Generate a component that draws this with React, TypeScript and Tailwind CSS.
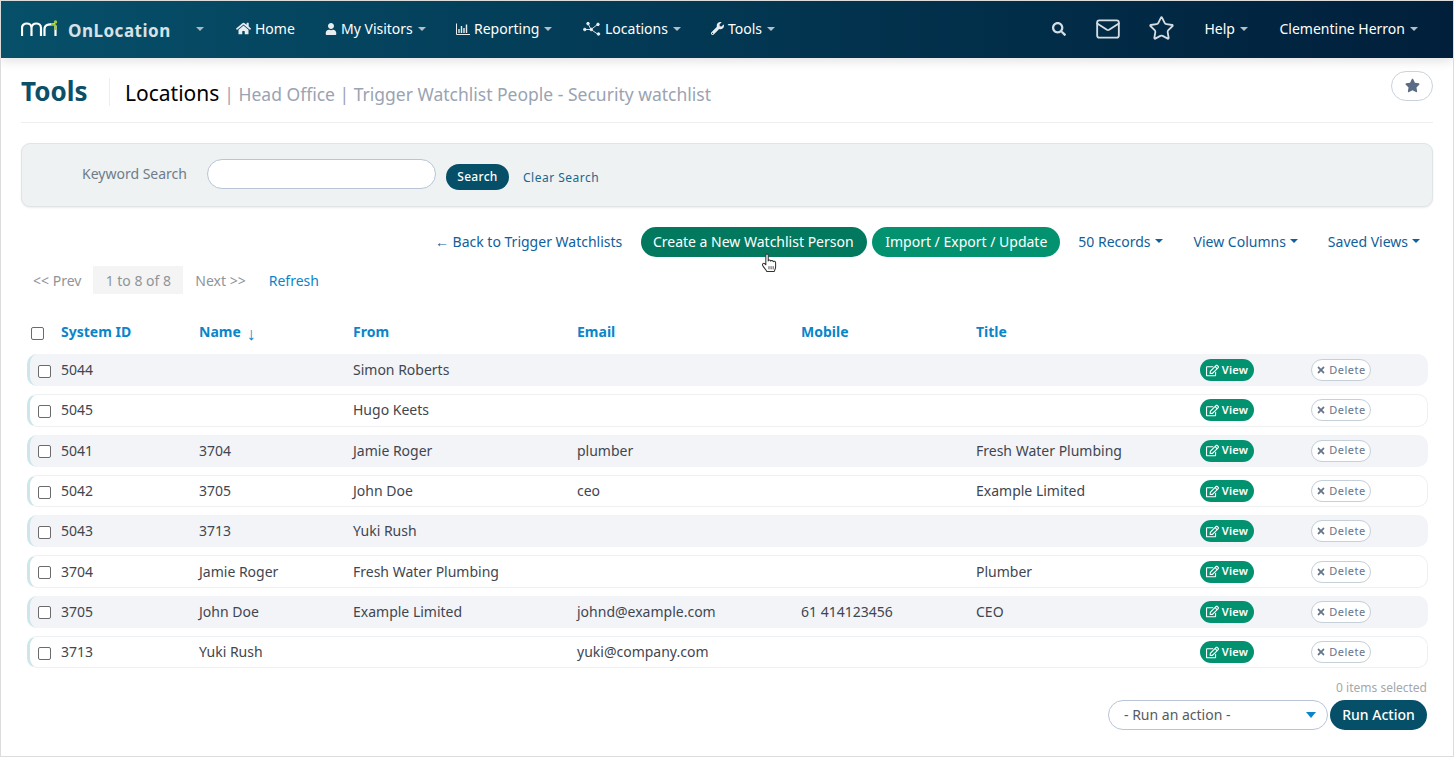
import { FaHome, FaUser, FaWrench, FaSearch, FaStar, FaTimes, FaRegEdit } from 'react-icons/fa';
import { Mail, Star } from 'lucide-react';

const rows = [
    { id: '5044', name: '', from: 'Simon Roberts', email: '', mobile: '', title: '' },
    { id: '5045', name: '', from: 'Hugo Keets', email: '', mobile: '', title: '' },
    { id: '5041', name: '3704', from: 'Jamie Roger', email: 'plumber', mobile: '', title: 'Fresh Water Plumbing' },
    { id: '5042', name: '3705', from: 'John Doe', email: 'ceo', mobile: '', title: 'Example Limited' },
    { id: '5043', name: '3713', from: 'Yuki Rush', email: '', mobile: '', title: '' },
    { id: '3704', name: 'Jamie Roger', from: 'Fresh Water Plumbing', email: '', mobile: '', title: 'Plumber' },
    { id: '3705', name: 'John Doe', from: 'Example Limited', email: 'johnd@example.com', mobile: '61 414123456', title: 'CEO' },
    { id: '3713', name: 'Yuki Rush', from: '', email: 'yuki@company.com', mobile: '', title: '' },
];

const headCols = 'grid grid-cols-[34px_138px_154px_224px_224px_175px_224px_111px_1fr] items-center';
const rowCols = 'grid grid-cols-[31px_138px_154px_224px_224px_175px_224px_111px_1fr] items-center';

function Caret({ className }: { className: string }) {
    return <span className={`inline-block w-0 h-0 border-x-[4px] border-x-transparent border-t-[4px] ${className}`} />;
}

function Logo() {
    return (
        <svg width="37" height="17" viewBox="0 0 37 17" fill="none" strokeWidth="2.2">
            <path d="M1 16V8C1 2 10.5 2 10.5 8V16M10.5 8C10.5 2 20 2 20 8V16" stroke="#ffffff" />
            <path d="M23.5 16V9C23.5 5 27 4.2 34 4.2" stroke="#ffffff" />
            <path d="M34.5 5.5V16" stroke="#ffffff" />
            <circle cx="34.5" cy="2" r="1.7" fill="#a4c83c" />
            <path d="M30 4.2C32 4.2 34.5 4 34.5 6.5V10" stroke="#a4c83c" />
        </svg>
    );
}

function BarsIcon() {
    return (
        <svg width="14" height="12" viewBox="0 0 14 12" fill="none" stroke="#e8edf0" strokeWidth="1">
            <path d="M0.5 0.5V11.5H14" />
            <path d="M3 10V6M5.5 10V3M8 10V5M10.5 10V1.5" strokeWidth="1.4" />
        </svg>
    );
}

function NetworkIcon() {
    return (
        <svg width="18" height="14" viewBox="0 0 18 14" fill="#e8edf0" stroke="#e8edf0" strokeWidth="0.9">
            <path d="M2 7.5H8L5 1.5M8 7.5L14.5 2.5M8 7.5L14.5 12" fill="none" />
            <circle cx="1.8" cy="7.5" r="1.3" />
            <circle cx="5" cy="1.6" r="1.3" />
            <circle cx="8.2" cy="7.5" r="1.3" />
            <circle cx="15" cy="2.4" r="1.3" />
            <circle cx="15.5" cy="12" r="1.3" />
        </svg>
    );
}

function HandCursor() {
    return (
        <svg width="17" height="20" viewBox="0 0 16 19" fill="#ffffff" stroke="#333333" strokeWidth="1" strokeLinejoin="round">
            <path d="M4.5 9V2.2C4.5 0.6 6.8 0.6 6.8 2.2V7.5C7 6.4 9 6.4 9.2 7.7C9.5 6.8 11.3 7 11.5 8.2C12 7.5 13.8 7.8 13.8 9.2V13C13.8 15 13 16 12.5 17.5H5.5C4.5 15.5 2.6 14 1.5 11.8C0.8 10.4 2.4 9.2 3.5 10.2L4.5 11.2Z" />
            <path d="M7.5 12.5V15.5M9.5 12.5V15.5M11.5 12.5V15.5" strokeWidth="0.8" />
        </svg>
    );
}

function NavItem({ icon, label, caret = true }: { icon?: React.ReactNode; label: string; caret?: boolean }) {
    return (
        <a className="flex items-center text-[14px] text-white">
            <span className="flex items-center gap-[4px]">
                {icon}
                <span>{label}</span>
            </span>
            {caret && <Caret className="border-t-[#b3bfc8] ml-[5px] mt-[1px]" />}
        </a>
    );
}

function Checkbox({ className = '' }: { className?: string }) {
    return <span className={`block w-[13px] h-[13px] rounded-[2px] border border-[#6b6b6b] bg-white ${className}`} />;
}

export default function App() {
    return (
        <div className="h-[757px] w-full overflow-hidden bg-white border border-[#dcdcdc] font-['Noto_Sans','Open_Sans',sans-serif] text-[14px] text-[#3f4650]">
            {/* Top nav */}
            <header className="h-[57px] flex items-center bg-gradient-to-r from-[#07506a] to-[#011f3b] shadow-[0_3px_10px_rgba(0,0,0,0.12)] pb-[2px] relative">
                <div className="flex items-center pl-[20px] w-[235px]">
                    <Logo />
                    <span className="ml-[10px] mt-[4px] text-[17px] font-bold tracking-[0.5px] text-[#d8e1e6]">OnLocation</span>
                    <Caret className="border-t-[#a9b8c1] ml-[25px] mt-[1px]" />
                </div>
                <nav className="flex items-center">
                    <div className="w-[89px]"><NavItem icon={<FaHome size={15} color="#e8edf0" />} label="Home" caret={false} /></div>
                    <div className="w-[131px]"><NavItem icon={<FaUser size={12} color="#e8edf0" />} label="My Visitors" /></div>
                    <div className="w-[127px]"><NavItem icon={<BarsIcon />} label="Reporting" /></div>
                    <div className="w-[128px]"><NavItem icon={<NetworkIcon />} label="Locations" /></div>
                    <NavItem icon={<FaWrench size={13} color="#e8edf0" />} label="Tools" />
                </nav>
                <div className="ml-auto flex items-center pr-[35px]">
                    <FaSearch size={14} color="#d5dde2" />
                    <Mail size={26} color="#d5dde2" strokeWidth={1.7} className="ml-[29px]" />
                    <Star size={27} color="#d5dde2" strokeWidth={1.6} className="ml-[27px]" />
                    <div className="ml-[29px] w-[75px]"><NavItem label="Help" /></div>
                    <NavItem label="Clementine Herron" />
                </div>
            </header>

            <main className="px-[20px]">
                {/* Page title */}
                <div className="h-[65px] flex items-center border-b border-[#eceef0]">
                    <h1 className="text-[26px] leading-[34px] font-bold text-[#0b4f68] w-[88px] mt-[2px]">Tools</h1>
                    <span className="h-[28px] border-l border-[#eceef0] mt-[3px]" />
                    <span className="ml-[15px] text-[21px] text-black mt-[8px]">Locations</span>
                    <span className="ml-[5px] text-[17.5px] text-[#9aa3b2] mt-[9px]">| Head Office | Trigger Watchlist People - Security watchlist</span>
                    <button className="ml-auto w-[42px] h-[30px] rounded-full border border-[#c9d3db] bg-white flex items-center justify-center -mt-[9px]">
                        <FaStar size={15} color="#5a6c84" />
                    </button>
                </div>

                {/* Search panel */}
                <div className="mt-[20px] h-[64px] rounded-[9px] border border-[#dfe4e6] bg-[#eef2f3] shadow-[0_1px_2px_rgba(0,0,0,0.08)] flex items-center pl-[60px]">
                    <span className="text-[#6e7c8a] text-[14px] -mt-[4px]">Keyword Search</span>
                    <input className="ml-[20px] w-[229px] h-[30px] rounded-full border border-[#b9c4d6] bg-white -mt-[2px]" />
                    <button className="ml-[10px] w-[63px] h-[26px] rounded-full bg-[#054f68] text-white text-[12px] font-medium tracking-[0.3px] mt-[3px] pt-[1px]">Search</button>
                    <a className="ml-[14px] text-[12px] tracking-[0.5px] text-[#17688f] mt-[6px]">Clear Search</a>
                </div>

                {/* Toolbar */}
                <div className="mt-[20px] h-[30px] flex items-center justify-end pr-[13px] text-[14px] text-[#0f609b]">
                    <a className="mr-[19px] pb-[2px]">← Back to Trigger Watchlists</a>
                    <div className="relative mr-[5px]">
                        <button className="w-[226px] h-[30px] rounded-full bg-[#02795f] text-white pb-[2px] pr-[2px]">Create a New Watchlist Person</button>
                        <span className="absolute left-[120px] top-[26px]"><HandCursor /></span>
                    </div>
                    <button className="w-[188px] h-[30px] rounded-full bg-[#039270] text-white pb-[2px]">Import / Export / Update</button>
                    <a className="ml-[18px] flex items-center gap-[4px] pb-[2px]">50 Records <Caret className="border-t-[#0f609b]" /></a>
                    <a className="ml-[31px] flex items-center gap-[4px] pb-[2px]">View Columns <Caret className="border-t-[#0f609b]" /></a>
                    <a className="ml-[30px] flex items-center gap-[4px] pb-[2px]">Saved Views <Caret className="border-t-[#0f609b]" /></a>
                </div>

                {/* Pager */}
                <div className="mt-[9px] h-[28px] flex items-center text-[#8f9499] text-[14px]">
                    <span className="ml-[12px]">&lt;&lt; Prev</span>
                    <span className="ml-[12px] w-[90px] h-[28px] bg-[#f4f4f4] flex items-center justify-center">1 to 8 of 8</span>
                    <span className="ml-[12px]">Next &gt;&gt;</span>
                    <a className="ml-[23px] text-[#0a85c9]">Refresh</a>
                </div>

                {/* Table header */}
                <div className={`${headCols} mt-[27px] ml-[6px] mr-[5px] h-[20px] font-bold text-[14px] text-[#0a85c9]`}>
                    <Checkbox className="ml-[4px] mt-[3px]" />
                    <span>System ID</span>
                    <span className="flex items-center">Name <span className="ml-[6px] font-normal text-[18px] leading-none mt-[2px]">↓</span></span>
                    <span>From</span>
                    <span>Email</span>
                    <span>Mobile</span>
                    <span>Title</span>
                </div>

                {/* Table rows */}
                <div className="mt-[13px] ml-[6px] mr-[5px] flex flex-col gap-[8px]">
                    {rows.map((row, i) => (
                        <div
                            key={row.id}
                            className={`${rowCols} h-[32.3px] rounded-[10px] border-l-[3px] border-l-[#cde6ec] ${i % 2 === 0 ? 'bg-[#f3f4f8]' : 'bg-white border-y border-r border-y-[#eef0f2] border-r-[#eef0f2]'}`}
                        >
                            <Checkbox className="ml-[8px] mt-[2px]" />
                            <span className="-mt-[1px]">{row.id}</span>
                            <span className="-mt-[1px]">{row.name}</span>
                            <span className="-mt-[1px]">{row.from}</span>
                            <span className="-mt-[1px]">{row.email}</span>
                            <span className="-mt-[1px]">{row.mobile}</span>
                            <span className="-mt-[1px]">{row.title}</span>
                            <span>
                                <button className="w-[54px] h-[22px] rounded-full bg-[#039270] text-white text-[11px] font-semibold tracking-[0.3px] flex items-center justify-center gap-[3px]">
                                    <FaRegEdit size={13} />
                                    View
                                </button>
                            </span>
                            <span>
                                <button className="w-[60px] h-[22px] rounded-full border border-[#c5d0d8] bg-white text-[#66758a] text-[11px] tracking-[0.5px] flex items-center justify-center gap-[3px]">
                                    <FaTimes size={10} />
                                    Delete
                                </button>
                            </span>
                        </div>
                    ))}
                </div>

                {/* Footer actions */}
                <div className="mt-[12px] mr-[6px] text-right text-[12px] text-[#a4a8ac] leading-[16px]">0 items selected</div>
                <div className="mt-[4px] mr-[6px] flex justify-end gap-[2px]">
                    <div className="w-[220px] h-[30px] rounded-full border border-[#b9c4d6] bg-white flex items-center pl-[15px] pr-[11px] pb-[2px] text-[#555b62]">
                        <span>- Run an action -</span>
                        <span className="ml-auto mt-[2px] w-0 h-0 border-x-[5px] border-x-transparent border-t-[6px] border-t-[#0a85c9]" />
                    </div>
                    <button className="w-[97px] h-[30px] rounded-full bg-[#054f68] text-white font-medium pb-[2px]">Run Action</button>
                </div>
            </main>
        </div>
    );
}
